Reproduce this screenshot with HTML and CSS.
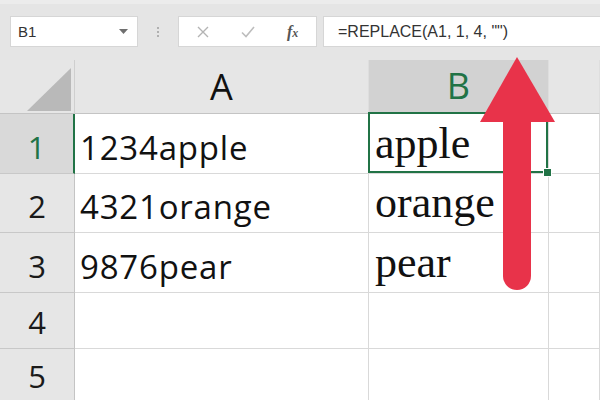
FILE: index.html
```html
<!DOCTYPE html>
<html>
<head>
<meta charset="utf-8">
<link rel="stylesheet" href="styles.css">
</head>
<body>
<div class="app">
  <div class="toolbar">
    <div class="namebox">
      <span class="name">B1</span>
      <svg class="caret" width="9" height="5" viewBox="0 0 9 5"><polygon points="0,0 9,0 4.5,5" fill="#6f6f6f"/></svg>
    </div>
    <div class="sep"><span></span><span></span><span></span></div>
    <div class="fxbox">
      <svg class="ico" width="14" height="14" viewBox="0 0 14 14"><path d="M2 2 L12 12 M12 2 L2 12" stroke="#b4b4b4" stroke-width="1.4" fill="none"/></svg>
      <svg class="ico" width="16" height="14" viewBox="0 0 16 14"><path d="M2 7.5 L6 11.5 L14 2" stroke="#bdbdbd" stroke-width="1.6" fill="none"/></svg>
      <span class="fx"><i>f</i><i class="fxx">x</i></span>
    </div>
    <div class="formula">=REPLACE(A1, 1, 4, "")</div>
  </div>
  <div class="sheet">
    <div class="corner">
      <svg width="44" height="43" viewBox="0 0 44 43"><polygon points="0,43 44,43 44,0" fill="#b9b9b9"/></svg>
    </div>
    <div class="colhead">A</div>
    <div class="colhead selected">B</div>
    <div class="colhead"></div>

    <div class="rowhead selected">1</div>
    <div class="cell sans">1234apple</div>
    <div class="cell serif active">apple</div>
    <div class="cell"></div>

    <div class="rowhead">2</div>
    <div class="cell sans">4321orange</div>
    <div class="cell serif">orange</div>
    <div class="cell"></div>

    <div class="rowhead">3</div>
    <div class="cell sans">9876pear</div>
    <div class="cell serif">pear</div>
    <div class="cell"></div>

    <div class="rowhead">4</div>
    <div class="cell"></div>
    <div class="cell"></div>
    <div class="cell"></div>

    <div class="rowhead last">5</div>
    <div class="cell"></div>
    <div class="cell"></div>
    <div class="cell"></div>
  </div>
  <svg class="arrow" width="600" height="400" viewBox="0 0 600 400">
    <polygon points="517,57 480,122 555,122" fill="#e8334a"/>
    <path d="M503 118 V276 A14 14 0 0 0 531 276 V118 Z" fill="#e8334a"/>
  </svg>
</div>
</body>
</html>
```

FILE: styles.css
```css
* { box-sizing: border-box; }
html, body { margin: 0; padding: 0; }
body {
  width: 600px;
  height: 400px;
  overflow: hidden;
  background: #e6e6e6;
  font-family: "Liberation Sans", Arial, sans-serif;
}
.app {
  position: relative;
  width: 600px;
  height: 400px;
  overflow: hidden;
}
.toolbar {
  height: 60px;
  border-top: 4px solid #ececec;
  padding: 12px 0 0 10px;
  display: flex;
  align-items: flex-start;
  background: #e5e5e5;
}
.namebox {
  width: 128px;
  height: 31px;
  background: #fff;
  border: 1px solid #d6d6d6;
  display: flex;
  align-items: center;
  justify-content: space-between;
  padding: 0 9px 0 7px;
}
.name {
  font-size: 15px;
  color: #333;
}
.caret { margin-top: -1px; }
.sep {
  width: 40px;
  height: 31px;
  display: flex;
  flex-direction: column;
  align-items: center;
  justify-content: center;
  gap: 2px;
}
.sep span {
  width: 2px;
  height: 2px;
  background: #b0b0b0;
}
.fxbox {
  width: 139px;
  height: 31px;
  background: #fff;
  border: 1px solid #d6d6d6;
  display: flex;
  align-items: center;
  padding: 0 0 0 17px;
}
.fxbox .ico { margin-right: 30px; }
.fxbox .ico + .ico { margin-right: 31px; }
.fx {
  font-family: "Liberation Serif", "Times New Roman", serif;
  font-size: 16px;
  color: #555;
  font-weight: bold;
}
.fx .fxx { font-size: 12px; }
.formula {
  flex: 1;
  margin-left: 6px;
  height: 31px;
  background: #fff;
  border: 1px solid #d6d6d6;
  border-right: none;
  font-size: 16px;
  color: #333;
  padding-left: 14px;
  line-height: 29px;
}
.sheet {
  display: grid;
  grid-template-columns: 75px 294px 180px 1fr;
  grid-template-rows: 54px 60px 59px 60px 56px 52px;
  background: #fff;
}
.corner {
  background: #e6e6e6;
  border-right: 1px solid #cfcfcf;
  border-bottom: 1px solid #c4c4c4;
  display: flex;
  justify-content: flex-end;
  align-items: flex-end;
  padding: 0 3px 2px 0;
}
.colhead {
  background: #e6e6e6;
  border-right: 1px solid #dedede;
  border-bottom: 1px solid #c4c4c4;
  display: flex;
  justify-content: center;
  align-items: flex-end;
  padding-bottom: 8px;
  font-family: "Open Sans", "Liberation Sans", sans-serif;
  font-size: 36px;
  line-height: 1;
  color: #111;
}
.colhead.selected {
  background: #d2d2d2;
  color: #217346;
  border-bottom: 2px solid #217346;
}
.rowhead {
  background: #e6e6e6;
  border-right: 1px solid #c4c4c4;
  border-bottom: 1px solid #c8c8c8;
  display: flex;
  justify-content: center;
  align-items: flex-end;
  padding-bottom: 10px;
  font-family: "Open Sans", "Liberation Sans", sans-serif;
  font-size: 31px;
  line-height: 1;
  color: #1a1a1a;
}
.rowhead.last { padding-bottom: 8px; }
.rowhead.selected {
  background: #d9d9d9;
  color: #217346;
  border-right: 2px solid #217346;
}
.cell {
  border-right: 1px solid #d9d9d9;
  border-bottom: 1px solid #d9d9d9;
  display: flex;
  align-items: flex-end;
  line-height: 1;
  color: #111;
  white-space: nowrap;
}
.cell.sans {
  font-family: "Open Sans", "Liberation Sans", sans-serif;
  font-size: 33px;
  letter-spacing: 0.8px;
  padding: 0 0 9px 5px;
}
.cell.serif {
  font-family: "Liberation Serif", "Times New Roman", serif;
  font-size: 44px;
  padding: 0 0 7px 6px;
}
.cell.active { position: relative; }
.cell.active::after {
  content: "";
  position: absolute;
  top: -2px;
  left: -1px;
  right: 0;
  bottom: 0;
  border: 2px solid #217346;
}
.cell.active::before {
  content: "";
  position: absolute;
  right: -4px;
  bottom: -4px;
  width: 7px;
  height: 7px;
  background: #217346;
  border: 1px solid #fff;
  z-index: 2;
}
.arrow {
  position: absolute;
  left: 0;
  top: 0;
  pointer-events: none;
}
```
